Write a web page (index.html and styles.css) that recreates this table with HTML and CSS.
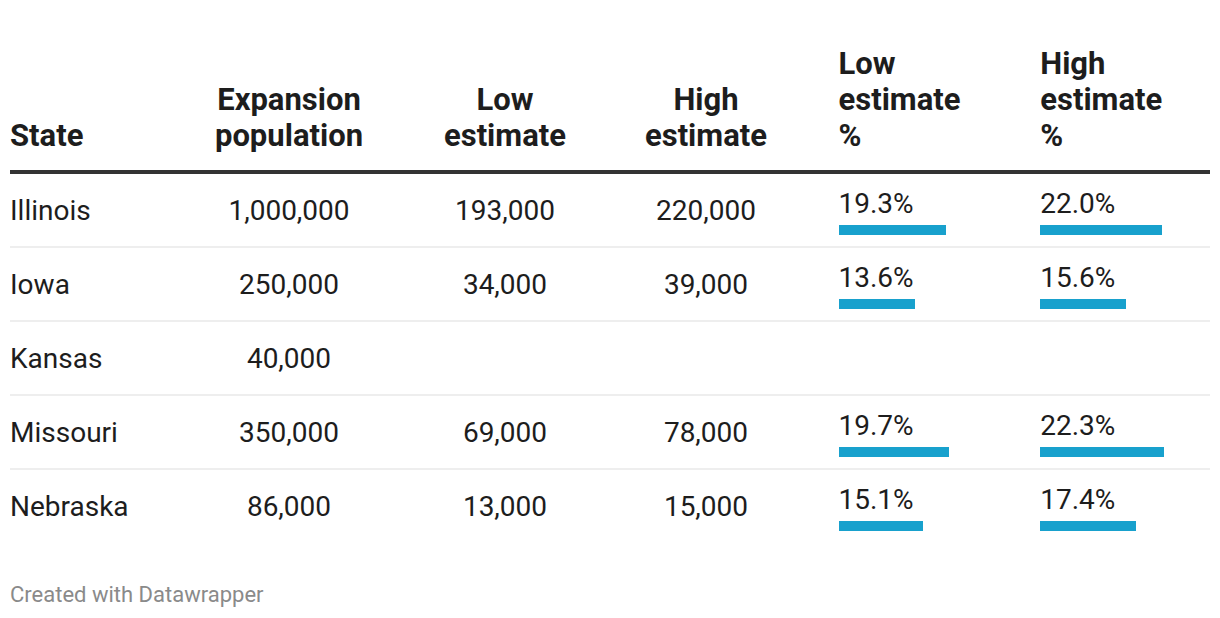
FILE: index.html
```html
<!DOCTYPE html>
<html lang="en">
<head>
<meta charset="utf-8">
<title>Expansion estimates</title>
<link rel="stylesheet" href="styles.css">
</head>
<body>
<div class="chart">
  <table class="dw-table">
    <colgroup>
      <col class="c-state">
      <col class="c-pop">
      <col class="c-num">
      <col class="c-num">
      <col class="c-pct">
      <col class="c-pct">
    </colgroup>
    <thead>
      <tr>
        <th class="left">State</th>
        <th class="center">Expansion population</th>
        <th class="center">Low<br>estimate</th>
        <th class="center">High<br>estimate</th>
        <th class="pct">Low<br>estimate<br>%</th>
        <th class="pct">High<br>estimate<br>%</th>
      </tr>
    </thead>
    <tbody>
      <tr>
        <td class="left">Illinois</td>
        <td class="center">1,000,000</td>
        <td class="center">193,000</td>
        <td class="center">220,000</td>
        <td class="pct"><div class="val">19.3%</div><div class="bar" style="width:107px"></div></td>
        <td class="pct"><div class="val">22.0%</div><div class="bar" style="width:122px"></div></td>
      </tr>
      <tr>
        <td class="left">Iowa</td>
        <td class="center">250,000</td>
        <td class="center">34,000</td>
        <td class="center">39,000</td>
        <td class="pct"><div class="val">13.6%</div><div class="bar" style="width:76px"></div></td>
        <td class="pct"><div class="val">15.6%</div><div class="bar" style="width:86px"></div></td>
      </tr>
      <tr>
        <td class="left">Kansas</td>
        <td class="center">40,000</td>
        <td class="center"></td>
        <td class="center"></td>
        <td class="pct"></td>
        <td class="pct"></td>
      </tr>
      <tr>
        <td class="left">Missouri</td>
        <td class="center">350,000</td>
        <td class="center">69,000</td>
        <td class="center">78,000</td>
        <td class="pct"><div class="val">19.7%</div><div class="bar" style="width:110px"></div></td>
        <td class="pct"><div class="val">22.3%</div><div class="bar" style="width:124px"></div></td>
      </tr>
      <tr>
        <td class="left">Nebraska</td>
        <td class="center">86,000</td>
        <td class="center">13,000</td>
        <td class="center">15,000</td>
        <td class="pct"><div class="val">15.1%</div><div class="bar" style="width:84px"></div></td>
        <td class="pct"><div class="val">17.4%</div><div class="bar" style="width:96px"></div></td>
      </tr>
    </tbody>
  </table>
  <div class="footer">Created with Datawrapper</div>
</div>
</body>
</html>
```

FILE: styles.css
```css
* { box-sizing: border-box; }

html, body {
  margin: 0;
  padding: 0;
  background: #ffffff;
}

body {
  font-family: Roboto, "Liberation Sans", Arial, sans-serif;
  color: #1d1d1d;
}

.chart {
  padding: 46px 10px 0 10px;
  width: 1220px;
}

.dw-table {
  width: 1200px;
  border-collapse: separate;
  border-spacing: 0;
  table-layout: fixed;
}

.c-state { width: 163.5px; }
.c-pop { width: 231px; }
.c-num { width: 201px; }
.c-pct { width: 201.75px; }

.dw-table th {
  font-weight: 700;
  font-size: 31px;
  line-height: 36px;
  vertical-align: bottom;
  padding: 0 0 16px 0;
  border-bottom: 4px solid #333333;
  color: #1d1d1d;
}

.dw-table td {
  font-size: 28px;
  line-height: 36px;
  font-weight: 400;
  height: 74px;
  padding: 2px 0 0 0;
  vertical-align: middle;
  border-bottom: 2px solid #eeeeee;
}

.dw-table tbody tr:last-child td {
  border-bottom: none;
  height: 72px;
}

.left { text-align: left; }
.center { text-align: center; }

.dw-table th.pct {
  text-align: left;
  padding: 0 0 16px 32px;
}

.dw-table td.pct {
  text-align: left;
  padding: 0 0 0 32px;
}

.val {
  line-height: 36px;
}

.bar {
  height: 10px;
  margin-top: 3px;
  background: #18a1cd;
}

.footer {
  margin-top: 41px;
  font-size: 22px;
  line-height: 24px;
  color: #8a8a8a;
}
```
